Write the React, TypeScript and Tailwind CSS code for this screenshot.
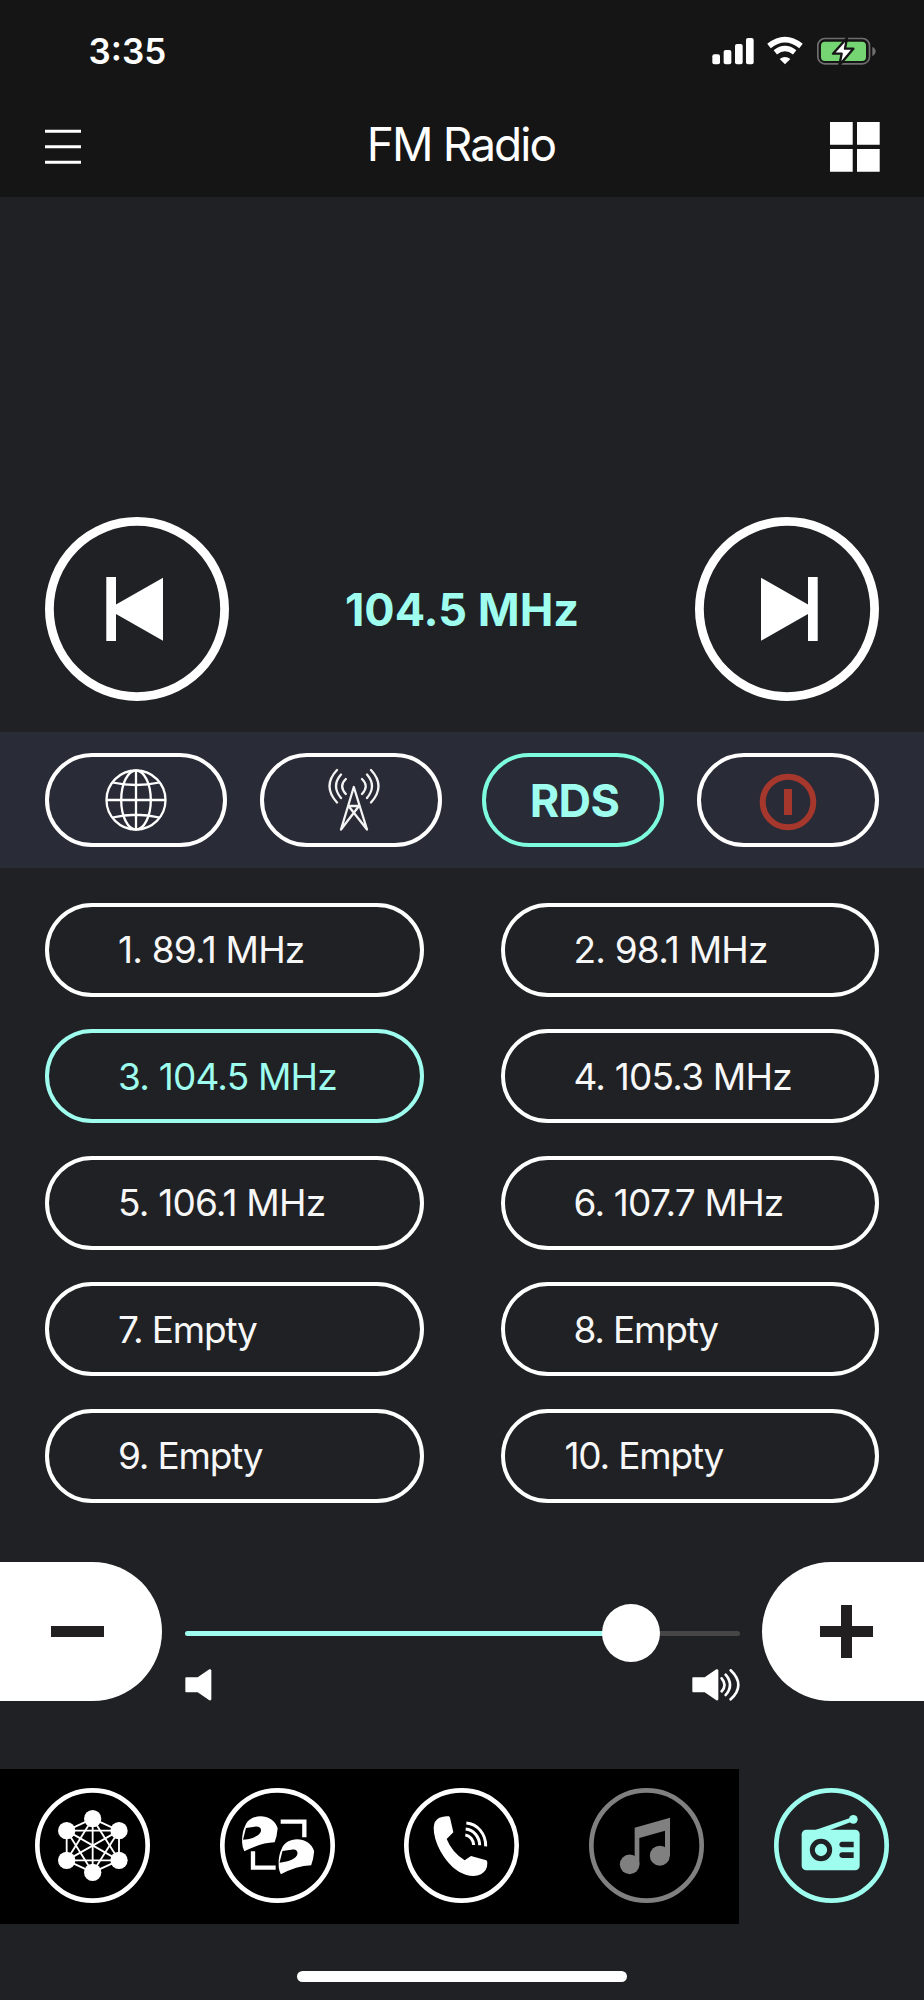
import clsx from 'clsx';
import { ReactNode } from 'react';

interface Preset {
	id: number;
	label: string;
}

const PRESETS: Preset[] = [
	{ id: 1, label: '89.1 MHz' },
	{ id: 2, label: '98.1 MHz' },
	{ id: 3, label: '104.5 MHz' },
	{ id: 4, label: '105.3 MHz' },
	{ id: 5, label: '106.1 MHz' },
	{ id: 6, label: '107.7 MHz' },
	{ id: 7, label: 'Empty' },
	{ id: 8, label: 'Empty' },
	{ id: 9, label: 'Empty' },
	{ id: 10, label: 'Empty' }
];

const ACTIVE_PRESET = 3;
const VOLUME = 80.5;

const StatusIcons = () => (
	<svg width="166" height="30" viewBox="0 0 498 90" fill="none">
		<g fill="#fff">
			<rect x="1" y="55" width="23" height="30" rx="6" />
			<rect x="35" y="42" width="23" height="43" rx="6" />
			<rect x="69" y="24" width="23" height="61" rx="6" />
			<rect x="102" y="6" width="23" height="79" rx="6" />
			<path d="M219 85 L203 69 Q219 57 235 69 Z" />
		</g>
		<path d="M171 30 Q219 -8 267 30" stroke="#fff" strokeWidth="17" />
		<path d="M190 49 Q219 26 248 49" stroke="#fff" strokeWidth="16" />
		<rect x="317.5" y="7.5" width="155" height="76" rx="21" stroke="#6e6e6e" strokeWidth="5" />
		<path d="M481 33 Q491 37 491 46 Q491 56 481 60 Z" fill="#6e6e6e" />
		<rect x="327" y="17" width="135" height="58" rx="12" fill="#75d572" />
		<path
			d="M405 6 L363 53 H389 L382 88 L424 38 H399 Z"
			fill="#fff"
			stroke="#151515"
			strokeWidth="7"
			strokeLinejoin="round"
		/>
	</svg>
);

const MenuIcon = () => (
	<svg width="36" height="36" viewBox="0 0 36 36" stroke="#fff" strokeWidth="3">
		<path d="M0 2.2H36M0 17.7H36M0 33.3H36" />
	</svg>
);

const GridIcon = () => (
	<svg width="50" height="50" viewBox="0 0 50 50" fill="#fff">
		<path d="M0 0H22.7V22.7H0ZM27 0H49.7V22.7H27ZM0 27H22.7V49.7H0ZM27 27H49.7V49.7H27Z" />
	</svg>
);

const SkipIcon = ({ forward = false }: { forward?: boolean }) => (
	<svg width="184" height="184" viewBox="0 0 184 184" className={clsx(forward && '-scale-x-100')}>
		<circle cx="92" cy="92" r="87.6" fill="none" stroke="#fff" strokeWidth="8.8" />
		<path d="M61.3 60H71V87.5L118 60.8V123.7L71 97V124H61.3Z" fill="#fff" />
	</svg>
);

const GlobeIcon = () => (
	<svg width="62" height="62" viewBox="0 0 62 62" fill="none" stroke="#fff" strokeWidth="2.3">
		<circle cx="31" cy="31" r="29.5" />
		<ellipse cx="31" cy="31" rx="14.8" ry="29.5" />
		<path d="M31 1.5V60.5M1.5 31H60.5M7.5 13.5Q31 18.5 54.5 13.5M7.5 48.5Q31 43 54.5 48.5" />
	</svg>
);

const TowerIcon = () => (
	<svg
		width="52"
		height="64"
		viewBox="0 0 52 64"
		fill="none"
		stroke="#f4f4f4"
		strokeWidth="2.3"
		strokeLinecap="round"
		strokeLinejoin="round"
	>
		<path d="M13 61.5L25.8 19L39 61.5L20.5 38M13 61.5L31 38M20.5 38L31.5 38" />
		<path d="M9 2Q-6 18 9 34.5M13 6.5Q3 18 13 30M17.8 11Q10.5 18 17.8 26" />
		<path d="M43 2Q58 18 43 34.5M39 6.5Q49 18 39 30M34 11Q41.5 18 34 26" />
	</svg>
);

const PowerIcon = () => (
	<svg width="58" height="58" viewBox="0 0 58 58">
		<circle cx="29" cy="29" r="25.3" fill="none" stroke="#a6372d" strokeWidth="6" />
		<rect x="25" y="16" width="8" height="26" fill="#a6372d" />
	</svg>
);

const SpeakerIcon = ({ loud = false }: { loud?: boolean }) => (
	<svg width={loud ? 48 : 27} height="32" viewBox={loud ? '0 0 144 96' : '0 0 81 96'}>
		<path d="M3 25H38L73 1Q78 0 79 4V91Q79 95 73 94L38 70H3Q1 70 1 66V29Q1 25 3 25Z" fill="#fff" />
		{loud && (
			<path
				d="M89 28Q106 48 89 67M101 17Q127 48 101 78M116 4Q162 48 116 91"
				fill="none"
				stroke="#fff"
				strokeWidth="8"
				strokeLinecap="round"
			/>
		)}
	</svg>
);

// hexagon corners of the mesh network, each one linked with all the others
const NODES = [
	[173, 92],
	[252, 128],
	[252, 217],
	[173, 253],
	[95, 217],
	[95, 128]
];

const MeshIcon = () => (
	<g>
		{NODES.map(([x1, y1], i) =>
			NODES.slice(i + 1).map(([x2, y2]) => (
				<line key={`${x2}-${y2}`} x1={x1} y1={y1} x2={x2} y2={y2} stroke="currentColor" strokeWidth="5.5" />
			))
		)}
		{NODES.map(([x, y]) => (
			<circle key={`${x}-${y}`} cx={x} cy={y} r="26" />
		))}
	</g>
);

const HELMET =
	'M75 115 C88 74 160 74 173 121 Q171 146 164 163 Q120 165 73 190 Q64 170 67 155 C85 154 113 149 122 132 C126 120 118 114 104 116 L78 120 L69 155 L66 157 Q67 130 75 115Z';

const IntercomIcon = () => (
	<g>
		<path d={HELMET} />
		<path d={HELMET} transform="translate(109.500 69)" />
		<path d="M182 101H253V148M99 190V239H167" fill="none" stroke="currentColor" strokeWidth="13" />
	</g>
);

const PhoneIcon = () => (
	<g>
		<path d="M106 89Q121 83 135 85Q138 87 139 93L148 133L128 153Q144 193 182 217L201 204L247 217Q250 219 250 226Q250 248 231 259Q211 269 185 260Q142 247 109 189Q89 151 89 119Q90 97 106 89Z" />
		<path
			d="M187 105A62 68 0 0 1 245 175M185 123A46 50 0 0 1 227 172M184 141A28 32 0 0 1 209 171"
			fill="none"
			stroke="currentColor"
			strokeWidth="9"
		/>
	</g>
);

const MusicIcon = () => (
	<g>
		<path d="M137 119L243 89V204H228V128L151 150V229H137Z" />
		<circle cx="122" cy="229" r="29.500" />
		<circle cx="212.500" cy="203" r="30" />
	</g>
);

const RadioIcon = () => (
	<g>
		<path d="M122 127L237 87L241 98L160 129Z" />
		<circle cx="238" cy="94" r="13" />
		<rect x="83" y="125" width="174" height="122" rx="14" />
		<circle cx="141" cy="186" r="26" fill="none" stroke="#202124" strokeWidth="15" />
		<path
			d="M239 161H204Q196 162 196 170Q196 177 204 178H239ZM239 193H204Q196 194 196 202Q196 209 204 210H239Z"
			fill="#202124"
		/>
	</g>
);

const NavItem = ({ children, className }: { children: ReactNode; className?: string }) => (
	<button className={clsx('flex flex-1 items-center justify-center', className)}>
		<svg width="115" height="115" viewBox="0 0 345 345" fill="currentColor">
			<circle cx="172.500" cy="172.500" r="165.500" fill="none" stroke="currentColor" strokeWidth="14" />
			{children}
		</svg>
	</button>
);

const PillButton = ({ children, className }: { children: ReactNode; className?: string }) => (
	<button
		className={clsx('flex h-[94px] w-[182px] items-center justify-center rounded-full border-4', className)}
	>
		{children}
	</button>
);

const PresetButton = ({ id, label }: Preset) => (
	<button
		className={clsx(
			'flex h-[94px] items-center rounded-full border-4 text-[37px] leading-none',
			id === ACTIVE_PRESET ? 'border-[#9efdee] text-[#9efdee]' : 'border-white text-[#f7f7f7]',
			id === 10 ? 'pl-[60px]' : 'pl-[69px]'
		)}
	>
		<span
			className={clsx(
				'font-normal whitespace-pre',
				label === 'Empty' ? 'tracking-[-1.2px]' : 'tracking-[-0.8px]'
			)}
		>
			{`${id}. ${label}`}
		</span>
	</button>
);

const App = () => {
	return (
		<div className="flex h-[2000px] w-[924px] flex-col overflow-hidden bg-[#202124] font-['Inter',sans-serif] text-white">
			<header className="h-[197px] bg-[#151515]">
				<div className="flex h-[102px] items-center justify-between pr-[46px] pl-[88.5px]">
					<span className="text-[35px] leading-none font-semibold">3:35</span>
					<StatusIcons />
				</div>
				<div className="flex h-[90px] items-center justify-between pr-[44px] pl-[45px]">
					<button className="w-[50px]">
						<MenuIcon />
					</button>
					<h1 className="-mt-[6px] pr-[3px] text-[46px] leading-none font-normal tracking-[-1.9px]">
						FM Radio
					</h1>
					<button>
						<GridIcon />
					</button>
				</div>
			</header>

			<section className="flex h-[535px] items-end justify-between px-[45px] pb-[31px]">
				<button>
					<SkipIcon />
				</button>
				<div className="flex h-[184px] items-center text-[45px] leading-none font-bold text-[#9efdee]">
					104.5 MHz
				</div>
				<button>
					<SkipIcon forward />
				</button>
			</section>

			<section className="flex h-[136px] items-center justify-between bg-[#292b36] px-[45px]">
				<div className="flex gap-[33px]">
					<PillButton className="border-white pr-px">
						<GlobeIcon />
					</PillButton>
					<PillButton className="border-white pl-[5px]">
						<TowerIcon />
					</PillButton>
				</div>
				<div className="flex gap-[33px]">
					<PillButton className="border-[#7dfcde] pl-[3px] text-[45px] leading-none font-bold tracking-[-0.6px] text-[#9efdee]">
						RDS
					</PillButton>
					<PillButton className="border-white pt-1">
						<PowerIcon />
					</PillButton>
				</div>
			</section>

			<section className="grid grid-cols-2 gap-x-[77px] gap-y-[32.5px] px-[45px] pt-[34.5px]">
				{PRESETS.map((preset) => (
					<PresetButton key={preset.id} {...preset} />
				))}
			</section>

			<section className="mt-[59.5px] flex h-[139px] justify-between">
				<button className="flex w-[162px] items-center rounded-r-full bg-white pl-[51px]">
					<span className="h-[11px] w-[53px] bg-[#221f20]" />
				</button>
				<div className="flex w-[555px] flex-col justify-between pt-[42px]">
					<div className="relative flex h-[58px] items-center">
						<div className="h-[5px] w-full overflow-hidden rounded-full bg-[#464646]">
							<div className="h-full bg-[#9efdee]" style={{ width: `${VOLUME}%` }} />
						</div>
						<div
							className="absolute size-[58px] -translate-x-1/2 rounded-full bg-white"
							style={{ left: `${VOLUME}%` }}
						/>
					</div>
					<div className="flex justify-between">
						<SpeakerIcon />
						<SpeakerIcon loud />
					</div>
				</div>
				<button className="flex w-[162px] items-center rounded-l-full bg-white pl-[58px]">
					<svg width="53" height="53" viewBox="0 0 53 53" stroke="#221f20" strokeWidth="11">
						<path d="M0 26.5H53M26.5 0V53" />
					</svg>
				</button>
			</section>

			<nav className="mt-[68px] flex h-[155px]">
				<NavItem className="bg-black pb-[3px]">
					<MeshIcon />
				</NavItem>
				<NavItem className="bg-black pb-[3px]">
					<IntercomIcon />
				</NavItem>
				<NavItem className="bg-black pb-[3px]">
					<PhoneIcon />
				</NavItem>
				<NavItem className="bg-black pb-[3px] text-[#808080]">
					<MusicIcon />
				</NavItem>
				<NavItem className="pb-[3px] text-[#9efdee]">
					<RadioIcon />
				</NavItem>
			</nav>

			<div className="mt-[47px] h-[11px] w-[330px] self-center rounded-full bg-white" />
		</div>
	);
};

export default App;
